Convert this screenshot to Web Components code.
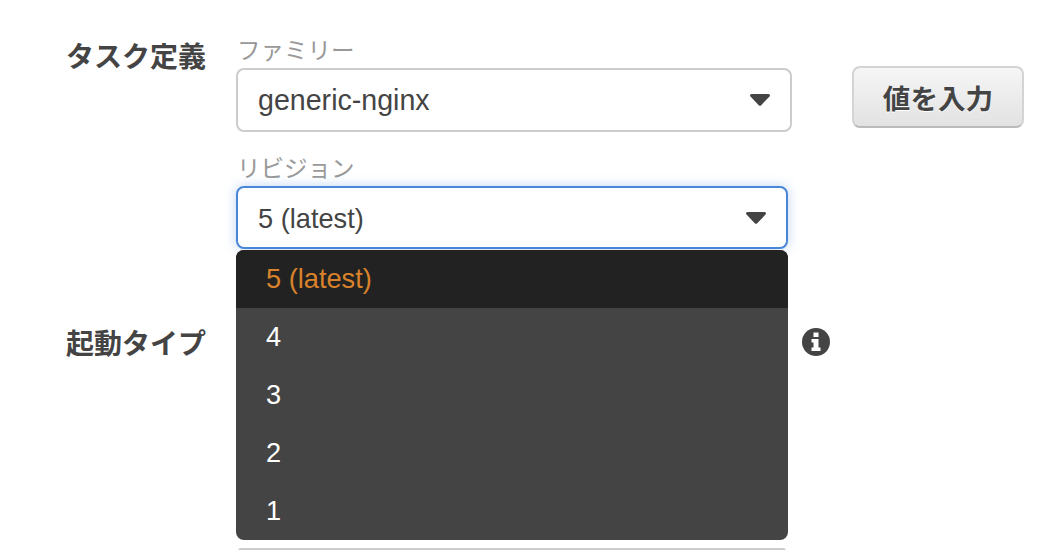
<!DOCTYPE html>
<html lang="ja">
<head>
<meta charset="utf-8">
<title>タスク定義</title>
<style>
  html, body { margin: 0; height: 550px; overflow: hidden; background: #fff; }
  body { font-family: "Liberation Sans", "Noto Sans CJK JP", sans-serif; color: #444; }
</style>
</head>
<body>
<task-form></task-form>

<script>
// small caret used by both selects
const CARET = `<svg width="20" height="12" viewBox="0 0 20 12"><path d="M0 1.5Q0 0 1.5 0H18.5Q20 0 20 1.5Q20 2 19.5 2.6L11 11.4Q10 12 9 11.4L.5 2.6Q0 2 0 1.5Z" fill="#444"/></svg>`;

const SELECT_TEMPLATE = document.createElement('template');
SELECT_TEMPLATE.innerHTML = `
  <style>
    :host {
      display: flex;
      align-items: center;
      justify-content: space-between;
      box-sizing: border-box;
      height: 64px;
      padding: 0 20px;
      background: #fff;
      border: 2px solid #ccc;
      border-radius: 8px;
      font-size: 28.6px;
      color: #444;
    }
    :host(.focus) {
      height: 63px;
      border-color: #4a86d8;
      box-shadow: 0 0 12px rgba(74, 134, 216, .35);
      font-size: 27.2px;
    }
    span { padding-top: 0; }
    :host(.focus) span { padding-top: 2px; }
    svg { display: block; }
  </style>
  <span><slot></slot></span>
  ${CARET}
`;

class AwsSelect extends HTMLElement {
  constructor() {
    super();
    this.attachShadow({mode: 'open'});
    this.shadowRoot.appendChild(SELECT_TEMPLATE.content.cloneNode(true));
  }
}
window.customElements.define('aws-select', AwsSelect);

const MENU_TEMPLATE = document.createElement('template');
MENU_TEMPLATE.innerHTML = `
  <style>
    :host {
      display: block;
      position: absolute;
      top: 100%;
      left: 0;
      right: 0;
      margin-top: 1px;
      z-index: 5;
      background: #444;
      border-radius: 8px;
      overflow: hidden;
      font-size: 27.2px;
      color: #fff;
    }
  </style>
  <slot></slot>
`;

class AwsMenu extends HTMLElement {
  constructor() {
    super();
    this.attachShadow({mode: 'open'});
    this.shadowRoot.appendChild(MENU_TEMPLATE.content.cloneNode(true));
  }
}
window.customElements.define('aws-menu', AwsMenu);

const OPTION_TEMPLATE = document.createElement('template');
OPTION_TEMPLATE.innerHTML = `
  <style>
    :host {
      display: flex;
      align-items: center;
      height: 58px;
      padding-left: 30px;
    }
    :host([selected]) {
      background: #222;
      color: #d9822b;
    }
  </style>
  <slot></slot>
`;

class AwsOption extends HTMLElement {
  constructor() {
    super();
    this.attachShadow({mode: 'open'});
    this.shadowRoot.appendChild(OPTION_TEMPLATE.content.cloneNode(true));
  }
}
window.customElements.define('aws-option', AwsOption);

const BUTTON_TEMPLATE = document.createElement('template');
BUTTON_TEMPLATE.innerHTML = `
  <style>
    :host {
      display: flex;
      align-items: center;
      justify-content: center;
      box-sizing: border-box;
      width: 172px;
      height: 62px;
      border: 2px solid #d4d4d4;
      border-bottom-color: #bbb;
      border-radius: 8px;
      background: linear-gradient(#f6f6f6, #e2e2e2);
      font-size: 27.6px;
      font-weight: 700;
      color: #444;
      text-shadow: 0 1px 0 #fff;
    }
  </style>
  <slot></slot>
`;

class AwsButton extends HTMLElement {
  constructor() {
    super();
    this.attachShadow({mode: 'open'});
    this.shadowRoot.appendChild(BUTTON_TEMPLATE.content.cloneNode(true));
  }
}
window.customElements.define('aws-button', AwsButton);

const FORM_TEMPLATE = document.createElement('template');
FORM_TEMPLATE.innerHTML = `
  <style>
    :host {
      display: block;
      padding: 36px 0 0 66px;
      font-family: "Liberation Sans", "Noto Sans CJK JP", sans-serif;
    }
    .row {
      display: grid;
      grid-template-columns: 170px 556px;
      align-items: start;
    }
    .title {
      padding-top: 2px;
      font-size: 28px;
      line-height: 40px;
      font-weight: 700;
      color: #444;
    }
    .hint {
      display: block;
      height: 32px;
      padding-left: 1px;
      font-size: 23.5px;
      line-height: 31px;
      color: #999;
    }
    .second { margin-top: 22px; width: 552px; position: relative; }
    .extras { position: relative; }
    aws-button { position: absolute; left: 616px; top: 30px; }
    .launch { margin-top: 74px; }
    .launch-field { display: flex; align-items: center; gap: 13px; height: 38px; }
    .launch-field i { display: block; flex: none; width: 552px; }
    svg.info { display: block; flex: none; width: 30px; height: 30px; }
    .next { margin: 183px 0 0 172px; width: 548px; height: 3px; background: #ccc; border-radius: 3px 3px 0 0; }
  </style>

  <div class="row">
    <div class="title">タスク定義</div>
    <div class="extras">
      <span class="hint">ファミリー</span>
      <aws-select>generic-nginx</aws-select>
      <aws-button>値を入力</aws-button>
      <div class="second">
        <span class="hint">リビジョン</span>
        <div style="position:relative">
          <aws-select class="focus">5 (latest)</aws-select>
          <aws-menu>
            <aws-option selected>5 (latest)</aws-option>
            <aws-option>4</aws-option>
            <aws-option>3</aws-option>
            <aws-option>2</aws-option>
            <aws-option>1</aws-option>
          </aws-menu>
        </div>
      </div>
    </div>
  </div>

  <div class="row launch">
    <div class="title">起動タイプ</div>
    <div class="launch-field">
      <i></i>
      <svg class="info" viewBox="0 0 30 30">
        <circle cx="15" cy="15" r="14" fill="#444"/>
        <rect x="12.5" y="5.5" width="5" height="4.5" fill="#fff"/>
        <path d="M10.5 12H17.5V20.5H19.5V24H10.5V20.5H12.5V15.5H10.5Z" fill="#fff"/>
      </svg>
    </div>
  </div>

  <div class="next"></div>
`;

class TaskForm extends HTMLElement {
  constructor() {
    super();
    this.attachShadow({mode: 'open'});
    this.shadowRoot.appendChild(FORM_TEMPLATE.content.cloneNode(true));
  }
}
window.customElements.define('task-form', TaskForm);
</script>
</body>
</html>
